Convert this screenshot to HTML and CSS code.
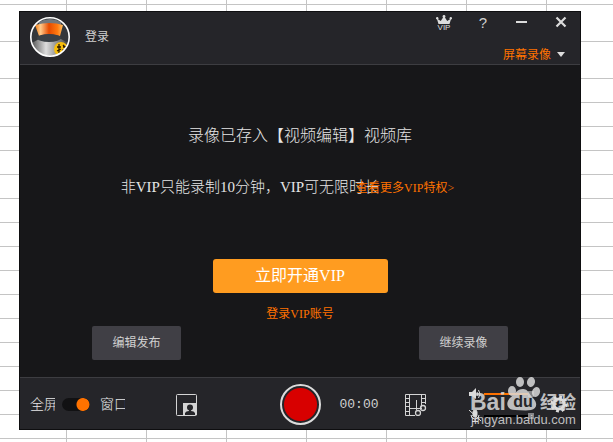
FILE: index.html
```
<!DOCTYPE html>
<html lang="zh-CN">
<head>
	<meta charset="UTF-8">
	<title>屏幕录像</title>
	<link rel="stylesheet" href="styles.css">
</head>
<body>
	<div class="window">
		<header class="header">
			<svg class="avatar" viewBox="0 0 40 40">
				<defs>
					<linearGradient id="metal"><stop offset="0" stop-color="#444"/><stop offset=".4" stop-color="#ddd"/><stop offset="1" stop-color="#333"/></linearGradient>
					<linearGradient id="glow"><stop offset="0" stop-color="#f07a10"/><stop offset=".2" stop-color="#ffc98a"/><stop offset=".5" stop-color="#e64a00"/><stop offset=".8" stop-color="#ff7a10"/><stop offset="1" stop-color="#ffc060"/></linearGradient>
					<clipPath id="round"><circle cx="20" cy="20" r="19"/></clipPath>
				</defs>
				<g clip-path="url(#round)">
					<rect width="40" height="40" fill="#34373b"/>
					<path d="M9 5q11-6 22 0v4H9z" fill="#73777b"/>
					<path d="M0 27l9-5h22l9 5v15H0z" fill="url(#metal)"/>
					<path d="M5 8q15-4 28 0l-3 11q-11-3-21 0z" fill="url(#glow)"/>
					<ellipse cx="19" cy="21" rx="12" ry="4" fill="#3b4146"/>
					<circle cx="31" cy="32" r="7" fill="#f6bd0c"/>
					<path d="M27 30h4m-2-3v9m-2-2l4-2m2-4l2 2m-2 0h4v3h-4v3l-1 2" fill="none" stroke="#2b1b00" stroke-width="1.3"/>
				</g>
				<circle cx="20" cy="20" r="19.2" fill="none" stroke="#fff" stroke-width="1.6"/>
			</svg>
			<a class="login" href="#">登录</a>
			<div class="tools">
				<div class="controls">
					<button class="icon" type="button" aria-label="VIP">
						<svg viewBox="0 0 16 16" width="16" height="16">
							<path d="M2.500 9L.8 3.500 4.800 6 8 1l3.200 5 4-2.500L13.500 9z" fill="#dcdcdc"/>
							<circle cx="1.200" cy="3.200" r="1.200" fill="#dcdcdc"/><circle cx="8" cy="1.500" r="1.400" fill="#dcdcdc"/><circle cx="14.800" cy="3.200" r="1.200" fill="#dcdcdc"/>
							<text class="crown-text" x="8" y="15" text-anchor="middle">VIP</text>
						</svg>
					</button>
					<button class="icon help" type="button">?</button>
					<button class="icon" type="button" aria-label="最小化">
						<svg viewBox="0 0 16 16" width="16" height="16"><path d="M2 7h11" stroke="#dcdcdc" stroke-width="2"/></svg>
					</button>
					<button class="icon" type="button" aria-label="关闭">
						<svg viewBox="0 0 16 16" width="16" height="16"><path d="M3.500 2.500l9 9M12.500 2.500l-9 9" stroke="#dcdcdc" stroke-width="2.200"/></svg>
					</button>
				</div>
				<div class="mode">
					<select aria-label="录像模式">
						<option>屏幕录像</option>
					</select>
				</div>
			</div>
		</header>

		<main class="main">
			<h1 class="title">录像已存入【视频编辑】视频库</h1>
			<p class="notice">非VIP只能录制10分钟，VIP可无限时长<a class="more" href="#">查看更多VIP特权&gt;</a></p>
			<button class="open-vip" type="button">立即开通VIP</button>
			<a class="vip-login" href="#">登录VIP账号</a>
			<div class="actions">
				<button class="action" type="button">编辑发布</button>
				<button class="action" type="button">继续录像</button>
			</div>
		</main>

		<footer class="footer">
			<div class="left">
				<label class="area" for="area">全屏</label>
				<input class="switch" type="checkbox" id="area" checked>
				<label class="area" for="area">窗口</label>
				<button class="icon pip" type="button" aria-label="画中画">
					<svg viewBox="0 0 22 22" width="22" height="22">
						<rect x=".5" y=".5" width="20" height="21" rx="1" fill="none" stroke="#d4d4d4"/>
						<path d="M7 9h14v12H7z" fill="#d4d4d4"/>
						<circle cx="14" cy="13.500" r="3" fill="#252529"/>
						<path d="M9 21v-2q1-2 4-2v-2h2v2q3 0 4 2v2z" fill="#252529"/>
					</svg>
				</button>
			</div>
			<button class="record" type="button" aria-label="录制"></button>
			<div class="right">
				<span class="time">00:00</span>
				<button class="icon" type="button" aria-label="剪辑">
					<svg viewBox="0 0 22 22" width="22" height="22" fill="none" stroke="#d4d4d4">
						<path d="M20.500 10V.5H.5v21H10M4.500.5v21M16.500.5v13M4.500 14.500H17M11.500 6v10"/>
						<path d="M.5 4.500h4M.5 8.500h4M.5 12.500h4M.5 17.500h4M16.500 4.500h4M16.500 8.500h4"/>
						<circle cx="13" cy="19" r="2.500" stroke-width="1.300"/><circle cx="18" cy="14" r="2.500" stroke-width="1.300"/>
					</svg>
				</button>
				<div class="mixer">
					<label for="speaker" aria-label="扬声器">
						<svg viewBox="0 0 12 12" width="12" height="12">
							<path d="M0 4h3l4-4v11L3 8H0z" fill="#dcdcdc"/>
							<path d="M8 4q1.500 2 0 4M9.500 2q3 4 0 8" fill="none" stroke="#dcdcdc"/>
						</svg>
					</label>
					<input class="range speaker" type="range" id="speaker" value="100">
					<label for="mic" aria-label="麦克风">
						<svg viewBox="0 0 12 12" width="12" height="12" fill="none" stroke="#dcdcdc">
							<rect x="4" y="0" width="4" height="7" rx="2" fill="#dcdcdc"/>
							<path d="M2 5q0 4 4 4t4-4M6 9v3M3 11.500h6M0 0l12 11"/>
						</svg>
					</label>
					<input class="range" type="range" id="mic" value="100">
				</div>
				<button class="icon gear" type="button" aria-label="设置">
					<svg viewBox="0 0 18 20" width="18" height="20" fill="none" stroke="#dcdcdc">
						<circle cx="9" cy="9" r="5" stroke-width="3"/>
						<circle cx="9" cy="9" r="7" stroke-width="3" stroke-dasharray="2.749 2.749"/>
					</svg>
				</button>
			</div>
			<svg class="watermark" viewBox="0 0 110 52" width="110" height="52">
				<ellipse cx="42" cy="15" rx="4" ry="5"/>
				<ellipse cx="50" cy="6" rx="4" ry="5"/>
				<ellipse cx="61" cy="6" rx="4" ry="5" transform="rotate(12 61 6)"/>
				<ellipse cx="66" cy="16" rx="4" ry="5" transform="rotate(20 66 16)"/>
				<path d="M53 13c5 0 6 5 10 9 5 5 4 11-2 12-5 1-11 0-16 0-8 0-10-7-5-12 5-4 7-9 13-9z"/>
				<text class="brand" x="0" y="34">Bai</text>
				<text class="brand du" x="53" y="31" text-anchor="middle">du</text>
				<text class="brand cn" x="70" y="33">经验</text>
				<text class="site" x="1" y="48">jingyan.baidu.com</text>
			</svg>
		</footer>
	</div>
</body>
</html>
```
FILE: styles.css
```
*{margin: 0;padding: 0;box-sizing: border-box;}
body{
	padding: 11px 32px 12px 19px;
	min-height: 100vh;
	font: 12px/16px "Liberation Serif","Noto Sans CJK SC",serif;
	color: #d0d0d0;
	background:
		linear-gradient(90deg,#c4c4c4 1px,transparent 1px) -14px 0/80px 100%,
		linear-gradient(#fff 4px,#c4c4c4 4px,#c4c4c4 5px,#fff 5px,#fff 41px,#c4c4c4 41px,#c4c4c4 42px,#fff 42px) 0 0/100% 78px no-repeat,
		linear-gradient(#c4c4c4 1px,#fff 1px) 0 78px/100% 24px;
}
a{color: #ff7200;text-decoration: none;}
button,select,input{font: inherit;color: inherit;border: 0;background: none;appearance: none;}
svg{display: block;}
.window{border: 1px solid #0e0e10;background: #171719;}

.header{display: flex;align-items: flex-start;padding-left: 10px;height: 53px;background: #252529;border-bottom: 1px solid #3d3d41;}
.avatar{width: 40px;height: 40px;margin-top: 5px;}
.login{margin: 17px 0 0 15px;color: #d0d0d0;}
.tools{display: flex;flex-direction: column;align-items: flex-end;gap: 16px;margin-left: auto;padding: 3px 11px 0 0;}
.controls{display: flex;gap: 23px;}
.icon{min-width: 16px;}
.crown-text{font: 8px "Liberation Sans",sans-serif;fill: #dcdcdc;}
.help{font: 15px/16px "Liberation Sans",sans-serif;}
.mode{position: relative;margin-right: 4px;color: #ff7200;}
.mode select{display: block;width: 62px;height: 16px;line-height: 16px;}
.mode::after{content: "";position: absolute;right: 0;top: 5px;border: 4px solid transparent;border-top: 5px solid #dcdcdc;border-bottom: 0;pointer-events: none;}

.main{display: flex;flex-direction: column;align-items: center;padding: 61px 0 17px;}
.title{font-size: 16px;line-height: 20px;font-weight: 300;color: #e6e6e6;}
.notice{margin: 31px 25px 0 0;font-size: 15px;line-height: 20px;font-weight: 300;color: #e6e6e6;white-space: nowrap;}
.more{margin-left: -23px;font-size: 12px;font-weight: 400;}
.open-vip{width: 175px;height: 34px;margin-top: 61px;border-radius: 3px;background: #ff9c20;color: #fff;font-size: 16px;}
.vip-login{margin-top: 13px;}
.actions{display: flex;justify-content: space-between;width: 416px;margin-top: 4px;}
.action{width: 89px;height: 34px;border-radius: 2px;background: #403f45;}

.footer{position: relative;display: grid;grid-template-columns: 1fr auto 1fr;align-items: center;height: 52px;padding-top: 2px;background: #252529;border-top: 1px solid #3d3d41;}
.left{display: flex;align-items: center;padding-left: 10px;}
.area{width: 25px;overflow: hidden;white-space: nowrap;font-size: 14px;line-height: 20px;font-weight: 300;color: #e6e6e6;}
.switch{width: 28px;height: 13px;margin: 0 10px 0 7px;border-radius: 7px;background: radial-gradient(circle at 21px,#ff7200 6px,#111113 7px);}
.pip{margin-left: 51px;}
.record{width: 41px;height: 41px;border: 2px solid #dcdcdc;border-radius: 50%;background: radial-gradient(circle,#d80000 16px,#252529 17px);}
.right{display: flex;align-items: center;padding-left: 19px;}
.time{width: 65px;font: 13px/16px "Liberation Mono",monospace;}
.mixer{display: grid;grid-template-columns: 12px 50px;gap: 10px 3px;align-items: center;margin-left: 42px;}
.range{width: 50px;height: 6px;background: linear-gradient(#000,#000) center/100% 2px no-repeat;}
.range::-webkit-slider-thumb{appearance: none;width: 6px;height: 6px;background: #858588;}
.speaker{background: linear-gradient(#ff7200,#ff7200) center/100% 2px no-repeat;}
.gear{margin-left: 16px;}
.watermark{position: absolute;right: 0;top: -2px;fill: #dcdcdc;opacity: .84;pointer-events: none;}
.brand{font: bold 23px "Liberation Sans",sans-serif;}
.du{font-size: 16px;fill: #252529;}
.cn{font: bold 18px "Noto Sans CJK SC",sans-serif;}
.site{font: 13px "Liberation Sans",sans-serif;}
```
